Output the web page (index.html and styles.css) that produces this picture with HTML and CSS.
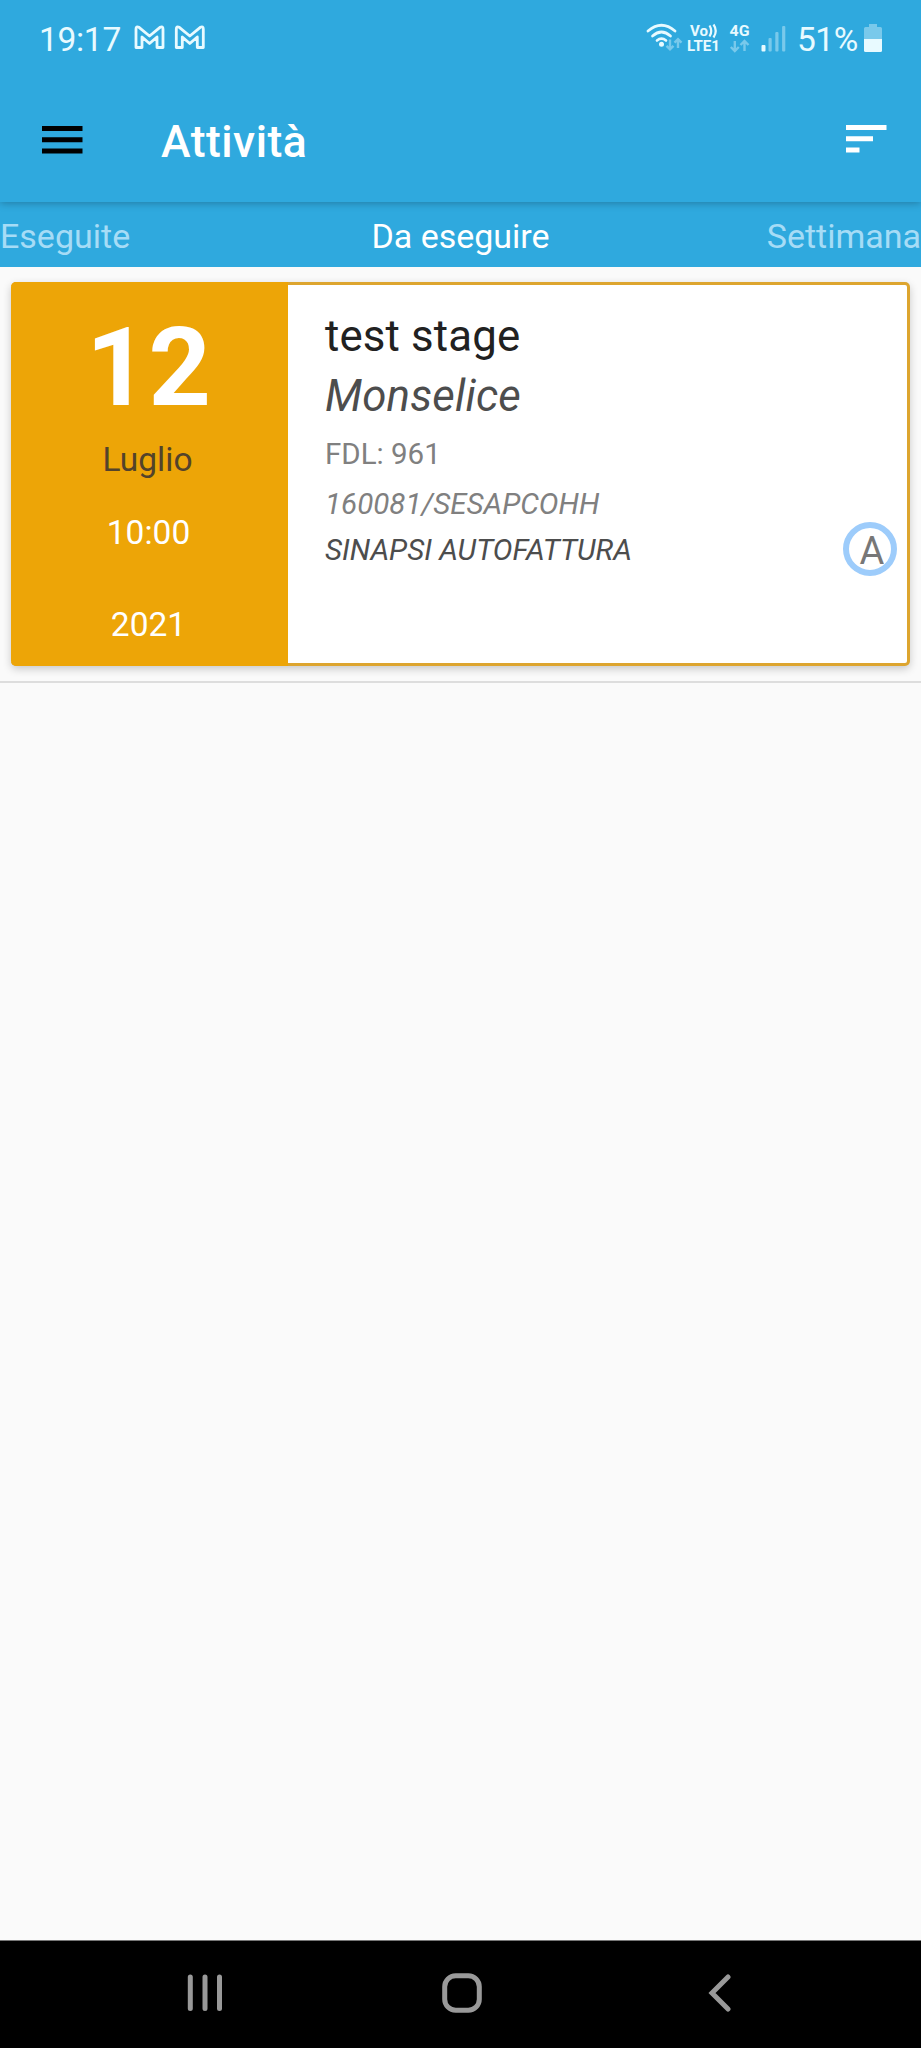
FILE: index.html
```html
<!DOCTYPE html>
<html lang="it">
<head>
<meta charset="utf-8">
<title>Attività</title>
<link rel="stylesheet" href="styles.css">
</head>
<body>
<div class="screen">
  <header class="header">
    <div class="status">
      <span class="clock">19:17</span>
      <svg class="mail" width="72" height="26" viewBox="0 0 72 26" fill="none" stroke="currentColor" stroke-width="2.800" stroke-linejoin="round">
        <path d="M2 22.500V4Q2 1 5 2.300L15.500 11 26 2.300Q29 1 29 4V22.500H23V12L15.500 18.500 8 12V22.500Z"/>
        <path d="M42.300 22.500V4Q42.300 1 45.300 2.300L55.800 11 66.300 2.300Q69.300 1 69.300 4V22.500H63.300V12L55.800 18.500 48.300 12V22.500Z"/>
      </svg>
      <svg class="signals" width="142" height="34" viewBox="0 0 142 34">
        <g fill="none" stroke="currentColor" stroke-width="2.700" stroke-linecap="round">
          <path d="M2 11Q15.500-.5 29 11"/>
          <path d="M6.500 16Q15.500 8 24.500 16"/>
          <path d="M11 20.500Q15.500 16.800 20 20.500"/>
        </g>
        <circle cx="15.500" cy="24.300" r="2.500" fill="currentColor"/>
        <g class="faint" fill="none" stroke="currentColor" stroke-width="2.400">
          <path d="M24 19.500V29M20.500 25.800 24 29.300 27.500 25.800M32 28V19.500M28.500 22.700 32 19.200 35.500 22.700"/>
          <path d="M88.800 21V31M84.800 27 88.800 31 92.800 27M98.500 31V21M94.500 25 98.500 21 102.500 25"/>
        </g>
        <g class="network" fill="currentColor">
          <text x="44" y="16" textLength="18" lengthAdjust="spacingAndGlyphs">Vo</text>
          <text x="41" y="31" textLength="33" lengthAdjust="spacingAndGlyphs">LTE1</text>
          <text x="83.500" y="16" textLength="20" lengthAdjust="spacingAndGlyphs">4G</text>
        </g>
        <g fill="none" stroke="currentColor" stroke-width="2.200">
          <path d="M63.500 5.500Q67 11 63.500 16.500M67.500 4.500Q72 11 67.500 17.500"/>
        </g>
        <rect x="115.500" y="25" width="4" height="6.500" rx="1" fill="currentColor"/>
        <g class="faint" fill="currentColor">
          <rect x="122.500" y="18" width="3.200" height="13.500" rx="1"/>
          <rect x="129.300" y="12" width="3.200" height="19.500" rx="1"/>
          <rect x="136.100" y="6" width="3.200" height="25.500" rx="1"/>
        </g>
      </svg>
      <span class="percent">51%</span>
      <svg class="battery" width="18" height="28" viewBox="0 0 18 28" fill="currentColor">
        <path class="faint" d="M5 0H13V3H16.500Q18 3 18 4.500V15H0V4.500Q0 3 1.500 3H5Z"/>
        <path d="M0 15H18V26.500Q18 28 16.500 28H1.500Q0 28 0 26.500Z"/>
      </svg>
    </div>
    <div class="toolbar">
      <svg class="menu" width="41" height="28" viewBox="0 0 41 28"><path d="M0 0H40.500V5H0ZM0 11.200H40.500V16.200H0ZM0 22.400H40.500V27.400H0Z" fill="#000"/></svg>
      <h1 class="title">Attività</h1>
      <svg class="sort" width="41" height="28" viewBox="0 0 41 28"><path d="M0 0H40.500V5H0ZM0 11.200H27V16.200H0ZM0 22.400H13.500V27.400H0Z" fill="#fff"/></svg>
    </div>
  </header>
  <nav class="tabs">
    <span class="tab">Eseguite</span>
    <span class="tab active">Da eseguire</span>
    <span class="tab right">Settimana</span>
  </nav>
  <main class="content">
    <div class="item">
      <article class="card">
        <div class="date">
          <div class="day">12</div>
          <div class="month">Luglio</div>
          <div class="hour">10:00</div>
          <div class="year">2021</div>
        </div>
        <div class="details">
          <div class="name">test stage</div>
          <div class="place">Monselice</div>
          <div class="fdl">FDL: 961</div>
          <div class="code">160081/SESAPCOHH</div>
          <div class="client">SINAPSI AUTOFATTURA</div>
        </div>
        <div class="badge">A</div>
      </article>
    </div>
  </main>
  <footer class="navbar">
    <svg width="36" height="38" viewBox="0 0 36 38"><path d="M3.300 3V34.500M18 3V34.500M32.500 3V34.500"/></svg>
    <svg class="home" width="40" height="40" viewBox="0 0 40 40"><rect x="2.700" y="2.700" width="34.600" height="34.600" rx="11"/></svg>
    <svg width="24" height="38" viewBox="0 0 24 38"><path d="M20 3 4 19 20 35"/></svg>
  </footer>
</div>
</body>
</html>
```
FILE: styles.css
```css
* { box-sizing: border-box; }
body { margin: 0; font-family: Roboto, "Liberation Sans", sans-serif; background: #fafafa; }
svg { display: block; flex: none; }
.screen { width: 921px; height: 2048px; display: flex; flex-direction: column; overflow: hidden; }
.header { height: 202px; flex: none; background: #2fa9de; box-shadow: 0 1px 8px rgba(0, 0, 0, .28); z-index: 1; }
.status { height: 80px; display: flex; align-items: flex-start; padding: 0 39px 0 39px; color: #e8faff; }
.clock, .percent { font-size: 33.500px; line-height: 80px; white-space: nowrap; }
.clock { width: 94px; letter-spacing: -.3px; }
.mail { margin: 25px 0 0 1px; }
.signals { margin: 20px 0 0 440px; }
.percent { width: 66px; margin-left: 9px; letter-spacing: -.5px; }
.battery { margin: 24px 0 0 1px; }
.faint { opacity: .4; }
.network { font-size: 15.500px; font-weight: 700; }
.toolbar { height: 122px; display: flex; align-items: center; padding: 0 34px 4px 42px; }
.menu { margin-top: 1px; }
.title { flex: 1; margin: 0 0 0 78px; color: #fff; font-size: 44.500px; font-weight: 500; letter-spacing: .5px; line-height: 60px; padding-top: 6px; }
.tabs { height: 65px; flex: none; display: grid; grid-template-columns: 1fr 1fr 1fr; background: #2fa9de; font-size: 34px; line-height: 68px; color: #a6dcf6; white-space: nowrap; }
.active { color: #fff; text-align: center; }
.right { text-align: right; }
.content { flex: 1; }
.item { padding: 15px 11px; height: 416px; border-bottom: 2px solid #ddd; }
.card { height: 384px; display: flex; position: relative; background: #fff; border: 3px solid #dda52f; border-left: 0; border-radius: 5px; box-shadow: 0 3px 8px rgba(0, 0, 0, .2); }
.date { width: 277px; margin: -3px 0; padding-right: 2px; border-radius: 5px 0 0 5px; background: #eda507; color: #fff; text-align: center; font-size: 33.500px; }
.day { height: 153px; line-height: 172px; font-size: 109px; font-weight: 700; }
.month { height: 48px; line-height: 50px; color: #53432b; padding-right: 2px; }
.hour { height: 98px; line-height: 100px; }
.year { height: 85px; line-height: 87px; }
.details { padding: 21px 0 0 37px; white-space: nowrap; }
.name { font-size: 43.800px; letter-spacing: .15px; line-height: 60px; color: #212121; }
.place { font-size: 43.800px; letter-spacing: .15px; line-height: 60px; font-style: italic; color: #4d4d4d; }
.fdl { font-size: 29.500px; line-height: 56px; color: #808080; }
.code { font-size: 29.500px; line-height: 44px; font-style: italic; color: #808080; }
.client { font-size: 29.500px; line-height: 49px; font-style: italic; color: #4d4d4d; }
.badge { position: absolute; right: 10px; top: 237px; width: 54px; height: 54px; border: 6px solid #9dccfb; border-radius: 50%; font-size: 38px; line-height: 47px; text-align: center; padding-left: 4px; color: #777; }
.navbar { height: 108px; flex: none; background: #000; border-top: 1px solid #777; display: flex; align-items: center; padding: 0 189px 4px 187px; justify-content: space-between; }
.navbar svg { fill: none; stroke: #999; stroke-width: 5; stroke-linecap: round; }
.navbar .home { margin-right: 8px; }
```
